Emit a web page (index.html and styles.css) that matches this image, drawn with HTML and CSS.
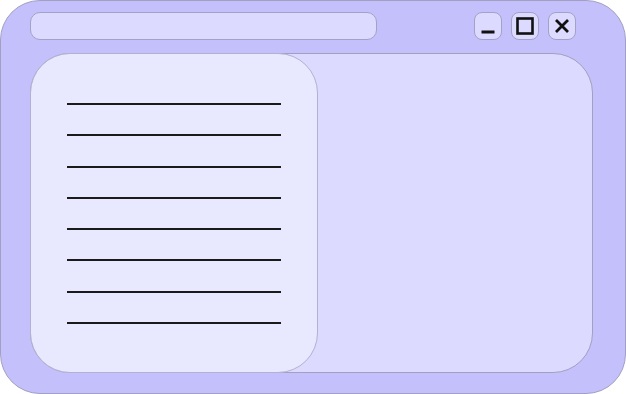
FILE: index.html
```html
<!DOCTYPE html>
<html lang="en">
<head>
    <meta charset="UTF-8">
    <title>Window</title>
    <link rel="stylesheet" href="styles.css">
</head>
<body>
    <div class="window">
        <div class="top-bar">
            <div class="address"></div>
            <div class="controls">
                <button class="ctrl" aria-label="minimize">
                    <svg width="16" height="16" viewBox="0 0 16 16"><path d="M1.5 14h13" stroke="#111" stroke-width="3"/></svg>
                </button>
                <button class="ctrl" aria-label="maximize">
                    <svg width="18" height="18" viewBox="0 0 18 18"><rect x="1.5" y="1.5" width="15" height="15" fill="none" stroke="#111" stroke-width="2.6"/></svg>
                </button>
                <button class="ctrl" aria-label="close">
                    <svg width="16" height="16" viewBox="0 0 16 16"><path d="M2 2L14 14M14 2L2 14" stroke="#111" stroke-width="2.8"/></svg>
                </button>
            </div>
        </div>
        <div class="content">
            <div class="sidebar">
                <div class="line"></div>
                <div class="line"></div>
                <div class="line"></div>
                <div class="line"></div>
                <div class="line"></div>
                <div class="line"></div>
                <div class="line"></div>
                <div class="line"></div>
            </div>
        </div>
    </div>
</body>
</html>
```

FILE: styles.css
```css
body {
    margin: 0;
    padding: 0;
    background: #fff;
    font-family: "Liberation Sans", Arial, sans-serif;
}

.window {
    width: 626px;
    height: 394px;
    box-sizing: border-box;
    border: 1px solid #a29fc0;
    border-radius: 40px;
    background: #c4c0fc;
    padding: 11px 32px 20px 29px;
    display: flex;
    flex-direction: column;
}

.top-bar {
    display: flex;
    align-items: center;
    height: 28px;
    flex-shrink: 0;
}

.address {
    width: 347px;
    height: 28px;
    box-sizing: border-box;
    border: 1px solid #a4a1c6;
    border-radius: 10px;
    background: #dcdafe;
}

.controls {
    display: flex;
    gap: 9px;
    margin-left: 97px;
}

    .controls .ctrl {
        width: 28px;
        height: 28px;
        box-sizing: border-box;
        padding: 0;
        border: 1px solid #a4a1c6;
        border-radius: 8px;
        background: #dcdafe;
        display: flex;
        align-items: center;
        justify-content: center;
    }

.content {
    flex: 1;
    margin-top: 13px;
    box-sizing: border-box;
    border: 1px solid #a29fc0;
    border-radius: 40px;
    background: #dcdafe;
    display: flex;
}

.sidebar {
    width: 288px;
    margin: -1px;
    box-sizing: border-box;
    border: 1px solid #b3b1cf;
    border-radius: 40px;
    background: #e8e8fe;
    padding: 49px 0 0 36px;
    display: flex;
    flex-direction: column;
    gap: 29.3px;
}

    .sidebar .line {
        width: 214px;
        height: 2px;
        background: #1a1a1a;
    }
```
